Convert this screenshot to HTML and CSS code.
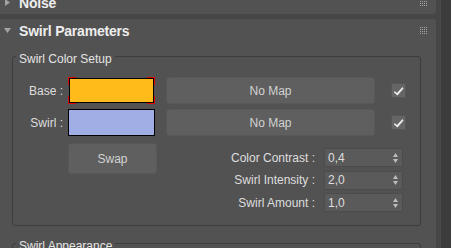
FILE: index.html
```html
<!DOCTYPE html>
<html lang="en">
<head>
  <meta charset="UTF-8">
  <title>Swirl Parameters</title>
  <link rel="stylesheet" href="styles.css">
</head>
<body>

<svg class="defs" width="0" height="0">
  <defs>
    <pattern id="gripDots" width="2" height="2" patternUnits="userSpaceOnUse">
      <rect width="1" height="1" fill="#a8a8a8"/>
    </pattern>
  </defs>
</svg>

<div class="app">
  <div class="rollouts">

    <!-- collapsed rollout, only its bottom shows -->
    <section class="rollout collapsed">
      <div class="rollout-head">
        <svg class="arrow" width="7" height="7"><polygon points="1,0 6,3.5 1,7"/></svg>
        <span class="rollout-title">Noise</span>
        <svg class="grip" width="7" height="7"><rect width="7" height="7" fill="url(#gripDots)"/></svg>
      </div>
    </section>

    <section class="rollout">
      <div class="rollout-head">
        <svg class="arrow" width="7" height="7"><polygon points="0,1 7,1 3.5,6"/></svg>
        <span class="rollout-title">Swirl Parameters</span>
        <svg class="grip" width="7" height="7"><rect width="7" height="7" fill="url(#gripDots)"/></svg>
      </div>

      <div class="group">
        <div class="group-title">Swirl Color Setup</div>

        <div class="color-row">
          <span class="row-label">Base :</span>
          <div class="swatch-cell">
            <div class="swatch base selected"></div>
          </div>
          <button class="map-btn">No Map</button>
          <span class="check">
            <svg width="12" height="12"><path d="M1.5 6 L4 8 L9.5 2 L10.5 3.5 L4.5 10.5 L1 7.5 Z"/></svg>
          </span>
        </div>

        <div class="color-row">
          <span class="row-label">Swirl :</span>
          <div class="swatch-cell">
            <div class="swatch swirl"></div>
          </div>
          <button class="map-btn">No Map</button>
          <span class="check">
            <svg width="12" height="12"><path d="M1.5 6 L4 8 L9.5 2 L10.5 3.5 L4.5 10.5 L1 7.5 Z"/></svg>
          </span>
        </div>

        <div class="lower">
          <button class="swap-btn">Swap</button>
          <div class="spinners">
            <div class="spinner-row">
              <span class="spinner-label">Color Contrast :</span>
              <div class="spinner">
                <span class="spinner-value">0,4</span>
                <svg class="spin-arrows" width="5" height="10"><polygon points="0,4 2.5,0 5,4"/><polygon points="0,6 5,6 2.5,10"/></svg>
              </div>
            </div>
            <div class="spinner-row">
              <span class="spinner-label">Swirl Intensity :</span>
              <div class="spinner">
                <span class="spinner-value">2,0</span>
                <svg class="spin-arrows" width="5" height="10"><polygon points="0,4 2.5,0 5,4"/><polygon points="0,6 5,6 2.5,10"/></svg>
              </div>
            </div>
            <div class="spinner-row">
              <span class="spinner-label">Swirl Amount :</span>
              <div class="spinner">
                <span class="spinner-value">1,0</span>
                <svg class="spin-arrows" width="5" height="10"><polygon points="0,4 2.5,0 5,4"/><polygon points="0,6 5,6 2.5,10"/></svg>
              </div>
            </div>
          </div>
        </div>
      </div>

      <div class="group next">
        <div class="group-title">Swirl Appearance</div>
      </div>
    </section>

  </div>
  <div class="scroll">
    <div class="scroll-track"></div>
  </div>
</div>

</body>
</html>
```

FILE: styles.css
```css
* {
  box-sizing: border-box;
}
body {
  margin: 0;
  background-color: #464646;
  font-family: "Liberation Sans", Arial, sans-serif;
  font-size: 12px;
  color: #dedede;
  overflow: hidden;
}
.defs {
  position: absolute;
}
.app {
  display: flex;
  height: 248px;
  overflow: hidden;
}
.rollouts {
  flex: 0 0 436px;
}

/* Rollouts */
.rollout {
  margin-left: -3px;
  background: #525252;
  border-radius: 3px;
  padding-bottom: 20px;
}
.rollout.collapsed {
  margin-top: -9px;
  margin-bottom: 5px;
  padding-bottom: 0;
}
.rollout-head {
  display: flex;
  align-items: center;
  height: 23px;
  padding-left: 7px;
}
.arrow {
  fill: #a3a3a3;
  margin-right: 8px;
}
.rollout-title {
  font-weight: bold;
  font-size: 14px;
  letter-spacing: -0.2px;
  color: #ededed;
}
.grip {
  margin-left: auto;
  margin-right: 9px;
  margin-top: -1px;
}

/* Group boxes */
.group {
  margin: 14px 15px 0 15px;
  border: 1px solid #3d3d3d;
  border-radius: 3px;
  padding-bottom: 13px;
}
.group.next {
  margin-top: 17px;
  height: 40px;
}
.group-title {
  width: fit-content;
  margin: -5px 0 0 3px;
  padding: 0 3px;
  line-height: 14px;
  background: #525252;
  color: #e4e4e4;
}

.color-row {
  display: flex;
  align-items: center;
  height: 27px;
  margin-top: 5px;
}
.group-title + .color-row {
  margin-top: 11px;
}
.row-label {
  width: 50px;
  text-align: right;
  margin-right: 5px;
}
.swatch-cell {
  width: 87px;
  height: 27px;
  margin-right: 11px;
  display: flex;
}
.swatch {
  flex: 1;
  border: 1px solid #000;
  position: relative;
}
.swatch.base {
  margin: 1px;
  background: #ffbb1a;
}
.swatch.swirl {
  background: #a1aee6;
}
/* red corner marks of the active swatch */
.swatch.selected::after {
  content: "";
  position: absolute;
  inset: -2px;
  background:
    linear-gradient(#e00000, #e00000) left top / 8px 1px no-repeat,
    linear-gradient(#e00000, #e00000) left top / 1px 8px no-repeat,
    linear-gradient(#e00000, #e00000) right top / 8px 1px no-repeat,
    linear-gradient(#e00000, #e00000) right top / 1px 8px no-repeat,
    linear-gradient(#e00000, #e00000) left bottom / 8px 1px no-repeat,
    linear-gradient(#e00000, #e00000) left bottom / 1px 8px no-repeat,
    linear-gradient(#e00000, #e00000) right bottom / 8px 1px no-repeat,
    linear-gradient(#e00000, #e00000) right bottom / 1px 8px no-repeat;
}

button {
  font-family: inherit;
  font-size: 12px;
  color: #d2d2d2;
  background: #5f5f5f;
  border: 1px solid #585858;
  border-radius: 3px;
  padding: 0;
}
.map-btn {
  width: 209px;
  height: 27px;
  margin-right: 16px;
}
.check {
  width: 15px;
  height: 15px;
  background: #656565;
  border: 1px solid #575757;
  display: flex;
  align-items: center;
  justify-content: center;
}
.check svg {
  fill: #ececec;
}

.lower {
  display: flex;
  align-items: flex-start;
  margin-top: 7px;
}
.swap-btn {
  width: 89px;
  height: 31px;
  margin-left: 55px;
}
.spinners {
  margin-left: auto;
  margin-right: 17px;
  margin-top: 5px;
  display: flex;
  flex-direction: column;
  gap: 3.5px;
}
.spinner-row {
  display: flex;
  align-items: center;
  justify-content: flex-end;
  height: 19px;
}
.spinner-label {
  margin-right: 9px;
}
.spinner {
  width: 79px;
  height: 19px;
  background: #5a5a5a;
  border: 1px solid #4c4c4c;
  display: flex;
  align-items: center;
  padding: 0 4px 0 3px;
}
.spinner-value {
  flex: 1;
}
.spin-arrows {
  fill: #bdbdbd;
}

/* right hand strip */
.scroll {
  flex: 0 0 15px;
  padding-left: 4px;
}
.scroll-track {
  height: 100%;
  background: #3c3c3c;
  border-left: 1px solid #4a4a4a;
}
```
